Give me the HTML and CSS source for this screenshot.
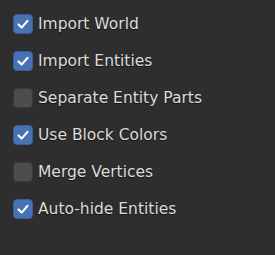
FILE: index.html
```html
<!DOCTYPE html>
<html lang="en">
<head>
    <meta charset="UTF-8">
    <title>Import Options</title>
    <link rel="stylesheet" href="styles.css">
</head>
<body>
    <div class="panel">
        <label class="option">
            <span class="box checked"><svg viewBox="0 0 20 20"><polyline points="5,10.5 8.5,14 15,6.5"/></svg></span>
            <span class="label">Import World</span>
        </label>
        <label class="option">
            <span class="box checked"><svg viewBox="0 0 20 20"><polyline points="5,10.5 8.5,14 15,6.5"/></svg></span>
            <span class="label">Import Entities</span>
        </label>
        <label class="option">
            <span class="box"></span>
            <span class="label">Separate Entity Parts</span>
        </label>
        <label class="option">
            <span class="box checked"><svg viewBox="0 0 20 20"><polyline points="5,10.5 8.5,14 15,6.5"/></svg></span>
            <span class="label">Use Block Colors</span>
        </label>
        <label class="option">
            <span class="box"></span>
            <span class="label">Merge Vertices</span>
        </label>
        <label class="option">
            <span class="box checked"><svg viewBox="0 0 20 20"><polyline points="5,10.5 8.5,14 15,6.5"/></svg></span>
            <span class="label">Auto-hide Entities</span>
        </label>
    </div>
</body>
</html>
```

FILE: styles.css
```css
body {
    margin: 0;
    background-color: #2e2e2e;
    font-family: "DejaVu Sans", sans-serif;
    min-height: 100vh;
}

.panel {
    display: flex;
    flex-direction: column;
    gap: 17px;
    padding: 14px 0 0 13px;
}

.option {
    display: flex;
    align-items: center;
    gap: 5px;
    height: 20px;
}

.box {
    width: 20px;
    height: 20px;
    box-sizing: border-box;
    border-radius: 4px;
    background-color: #4d4d4d;
    border: 1px solid #3a3a3a;
    display: flex;
}

.box.checked {
    background-color: #4772b3;
    border-color: #3b5f96;
}

.box svg {
    width: 100%;
    height: 100%;
}

.box polyline {
    fill: none;
    stroke: #fff;
    stroke-width: 2.4;
    stroke-linecap: round;
    stroke-linejoin: round;
}

.label {
    color: #dcdcdc;
    font-size: 15.5px;
    text-shadow: 0 1px 1px rgba(0, 0, 0, 0.6);
}
```
